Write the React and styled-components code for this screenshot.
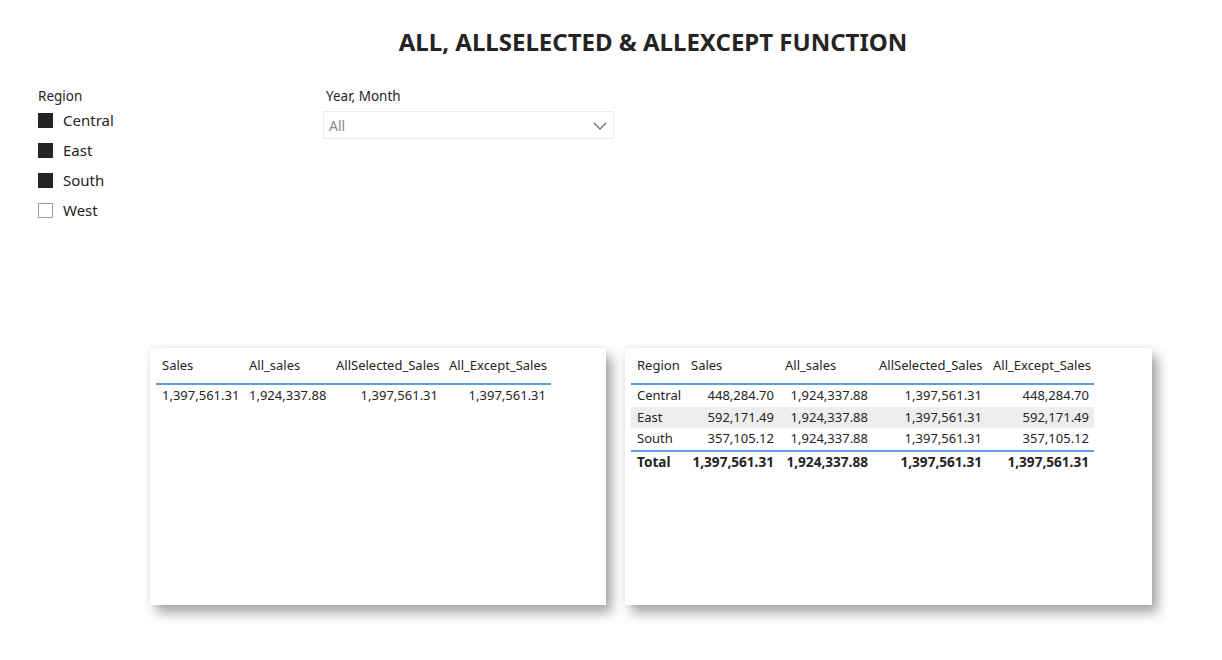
import React from 'react'
import styled, { createGlobalStyle } from 'styled-components'

const GlobalStyle = createGlobalStyle`
    body {
        margin: 0;
        background: #ffffff;
        font-family: "Noto Sans", "Open Sans", sans-serif;
        color: #252423;
    }
`

const Page = styled.div`
    width: 1222px;
    height: 660px;
    display: flex;
    flex-direction: column;
    overflow: hidden;
`

const Title = styled.h1`
    margin: 0;
    padding: 27px 0 0 84px;
    text-align: center;
    font-size: 24px;
    line-height: 30px;
    font-weight: 700;
    color: #252423;
`

const SlicerRow = styled.div`
    display: flex;
    padding-left: 38px;
    margin-top: 30px;
    height: 140px;
`

const Slicer = styled.div`
    width: ${props => props.width}px;
    display: flex;
    flex-direction: column;
`

const SlicerHeader = styled.div`
    font-size: 13.5px;
    line-height: 18px;
    color: #252423;
    padding-left: ${props => props.indent || 0}px;
    margin-bottom: ${props => props.gap || 0}px;
`

const CheckItem = styled.div`
    display: flex;
    align-items: center;
    height: 30px;
    gap: 10px;
    font-size: 15px;
    color: #252423;
`

const Box = styled.span`
    width: 15px;
    height: 15px;
    box-sizing: border-box;
    background: ${props => props.checked ? '#252423' : '#ffffff'};
    border: 1px solid ${props => props.checked ? '#252423' : '#a19f9d'};
`

const Dropdown = styled.div`
    width: 291px;
    height: 28px;
    box-sizing: border-box;
    border: 1px solid #ebebeb;
    display: flex;
    align-items: center;
    justify-content: space-between;
    padding: 1px 6px 0 5px;
    font-size: 14px;
    color: #8a8886;
`

const TablesRow = styled.div`
    display: flex;
    gap: 19px;
    padding-left: 150px;
    margin-top: 121px;
`

const Card = styled.div`
    width: ${props => props.width}px;
    height: 257px;
    background: #ffffff;
    box-shadow: 6px 8px 11px rgba(0, 0, 0, 0.34), 0 -1px 5px rgba(0, 0, 0, 0.07);
    padding: 4px 0 0 6px;
    box-sizing: border-box;
`

const Grid = styled.div`
    display: grid;
    grid-template-columns: ${props => props.cols};
    font-size: 13px;
    color: #252423;
`

const Row = styled.div`
    display: contents;
`

const HeadCell = styled.div`
    padding: 5px 5px 10px 6px;
    line-height: 16px;
    border-bottom: 2px solid #5a9fe3;
    white-space: nowrap;
`

const Cell = styled.div`
    box-sizing: border-box;
    height: 21.5px;
    line-height: ${props => props.total ? 19.5 : 21.5}px;
    padding: 0 5px 0 6px;
    text-align: ${props => props.left ? 'left' : 'right'};
    background: ${props => props.shaded ? '#eeeeee' : 'transparent'};
    border-top: ${props => props.total ? '2px solid #5a9fe3' : 'none'};
    font-weight: ${props => props.total ? 700 : 400};
    font-size: ${props => props.total ? 13.6 : 13}px;
    white-space: nowrap;
`

const Chevron = () => (
    <svg width="14" height="8" viewBox="0 0 14 8">
        <path d="M1 1 L7 7 L13 1" fill="none" stroke="#605e5c" strokeWidth="1.1" />
    </svg>
)

const regions = [
    { name: 'Central', checked: true },
    { name: 'East', checked: true },
    { name: 'South', checked: true },
    { name: 'West', checked: false },
]

const heads = ['Sales', 'All_sales', 'AllSelected_Sales', 'All_Except_Sales']

const regionRows = [
    ['Central', '448,284.70', '1,924,337.88', '1,397,561.31', '448,284.70'],
    ['East', '592,171.49', '1,924,337.88', '1,397,561.31', '592,171.49'],
    ['South', '357,105.12', '1,924,337.88', '1,397,561.31', '357,105.12'],
]

const total = ['Total', '1,397,561.31', '1,924,337.88', '1,397,561.31', '1,397,561.31']

export default function App() {
    return (
        <Page>
            <GlobalStyle />
            <Title>ALL, ALLSELECTED &amp; ALLEXCEPT FUNCTION</Title>

            <SlicerRow>
                <Slicer width={285}>
                    <SlicerHeader>Region</SlicerHeader>
                    {regions.map(r =>
                        <CheckItem key={r.name}>
                            <Box checked={r.checked} />
                            {r.name}
                        </CheckItem>
                    )}
                </Slicer>
                <Slicer width={300}>
                    <SlicerHeader indent={3} gap={6}>Year, Month</SlicerHeader>
                    <Dropdown>
                        All
                        <Chevron />
                    </Dropdown>
                </Slicer>
            </SlicerRow>

            <TablesRow>
                <Card width={456}>
                    <Grid cols="87px 87px 113px 108px">
                        {heads.map(h => <HeadCell key={h}>{h}</HeadCell>)}
                        {['1,397,561.31', '1,924,337.88', '1,397,561.31', '1,397,561.31'].map((v, i) =>
                            <Cell key={i} left={i === 1}>{v}</Cell>
                        )}
                    </Grid>
                </Card>
                <Card width={527}>
                    <Grid cols="54px 94px 94px 114px 107px">
                        {['Region', ...heads].map(h => <HeadCell key={h}>{h}</HeadCell>)}
                        {regionRows.map((row, ri) =>
                            <Row key={row[0]}>
                                {row.map((v, i) =>
                                    <Cell key={i} left={i === 0} shaded={ri === 1}>{v}</Cell>
                                )}
                            </Row>
                        )}
                        {total.map((v, i) =>
                            <Cell key={i} left={i === 0} total>{v}</Cell>
                        )}
                    </Grid>
                </Card>
            </TablesRow>
        </Page>
    )
}
